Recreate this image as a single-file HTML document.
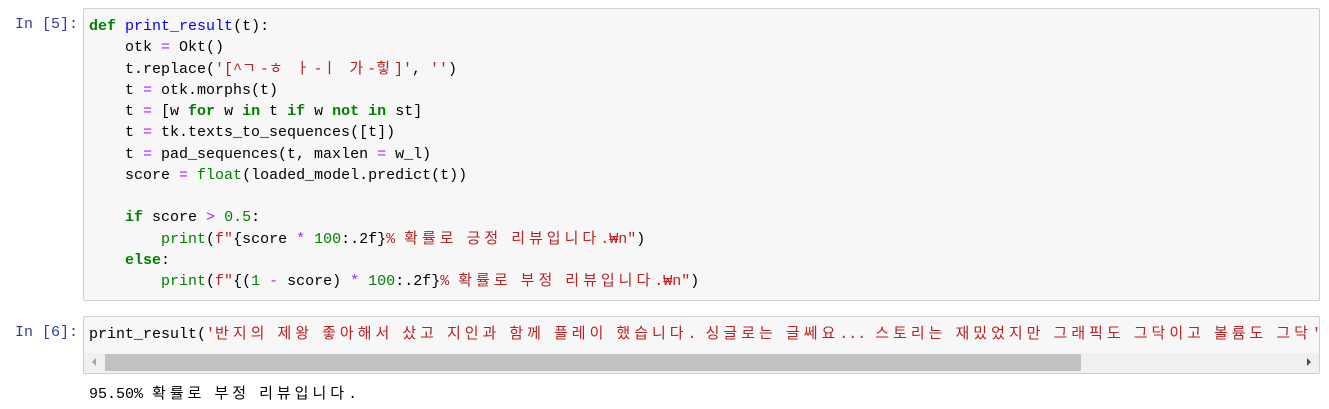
<!DOCTYPE html>
<html><head><meta charset="utf-8"><style>
body{margin:0;background:#fff;width:1329px;height:409px;overflow:hidden;font-family:"Liberation Mono","Noto Sans CJK KR",monospace;font-size:15px;color:#000}
.p{position:absolute;left:15px;color:#303f9f;font-size:15px}
.box{position:absolute;left:83px;width:1235px;background:#f7f7f7;border:1px solid #cfcfcf;border-radius:2px;overflow:hidden}
pre{margin:0;font:inherit;line-height:21.25px;white-space:pre;padding-left:5px}
.k{color:#008000;font-weight:bold}.nf{color:#0000ff}.o{color:#aa22ff}.s{color:#ba2121}.m{color:#008000}.b{color:#008000}
.h{letter-spacing:4px}
</style></head><body>
<div class="p" style="top:16px">In [5]:</div>
<div class="box" style="top:8px;height:291px"><pre style="padding-top:7px"><span class="k">def</span> <span class="nf">print_result</span>(t):
    otk <span class="o">=</span> Okt()
    t.replace(<span class="s">'[^<span class="h">ㄱ</span>-<span class="h">ㅎ</span> <span class="h">ㅏ</span>-<span class="h">ㅣ</span> <span class="h">가</span>-<span class="h">힣</span>]'</span>, <span class="s">''</span>)
    t <span class="o">=</span> otk.morphs(t)
    t <span class="o">=</span> [w <span class="k">for</span> w <span class="k">in</span> t <span class="k">if</span> w <span class="k">not</span> <span class="k">in</span> st]
    t <span class="o">=</span> tk.texts_to_sequences([t])
    t <span class="o">=</span> pad_sequences(t, maxlen <span class="o">=</span> w_l)
    score <span class="o">=</span> <span class="b">float</span>(loaded_model.predict(t))

    <span class="k">if</span> score <span class="o">&gt;</span> <span class="m">0.5</span>:
        <span class="b">print</span>(<span class="s">f"</span>{score <span class="o">*</span> <span class="m">100</span>:.2f}<span class="s">% <span class="h">확률로</span> <span class="h">긍정</span> <span class="h">리뷰입니다</span>.₩n"</span>)
    <span class="k">else</span>:
        <span class="b">print</span>(<span class="s">f"</span>{(<span class="m">1</span> <span class="o">-</span> score) <span class="o">*</span> <span class="m">100</span>:.2f}<span class="s">% <span class="h">확률로</span> <span class="h">부정</span> <span class="h">리뷰입니다</span>.₩n"</span>)</pre></div>
<div class="p" style="top:324px">In [6]:</div>
<div class="box" style="top:316px;height:56px">
<pre style="padding-top:7px">print_result(<span class="s">'<span class="h">반지의</span> <span class="h">제왕</span> <span class="h">좋아해서</span> <span class="h">샀고</span> <span class="h">지인과</span> <span class="h">함께</span> <span class="h">플레이</span> <span class="h">했습니다</span>. <span class="h">싱글로는</span> <span class="h">글쎄요</span>... <span class="h">스토리는</span> <span class="h">재밌었지만</span> <span class="h">그래픽도</span> <span class="h">그닥이고</span> <span class="h">볼륨도</span> <span class="h">그닥</span>'</span></pre>
<div style="position:absolute;left:0;top:36px;width:1235px;height:20px;background:#f0f0f0"></div>
<div style="position:absolute;left:21px;top:37px;width:976px;height:17px;background:#c1c1c1"></div>
<div style="position:absolute;left:8px;top:41px;width:0;height:0;border-top:4px solid transparent;border-bottom:4px solid transparent;border-right:4px solid #a3a3a3"></div>
<div style="position:absolute;left:1223px;top:41px;width:0;height:0;border-top:4px solid transparent;border-bottom:4px solid transparent;border-left:4px solid #505050"></div>
</div>
<pre style="position:absolute;left:84px;top:384px;line-height:21px">95.50% <span class="h">확률로</span> <span class="h">부정</span> <span class="h">리뷰입니다</span>.</pre>
</body></html>
